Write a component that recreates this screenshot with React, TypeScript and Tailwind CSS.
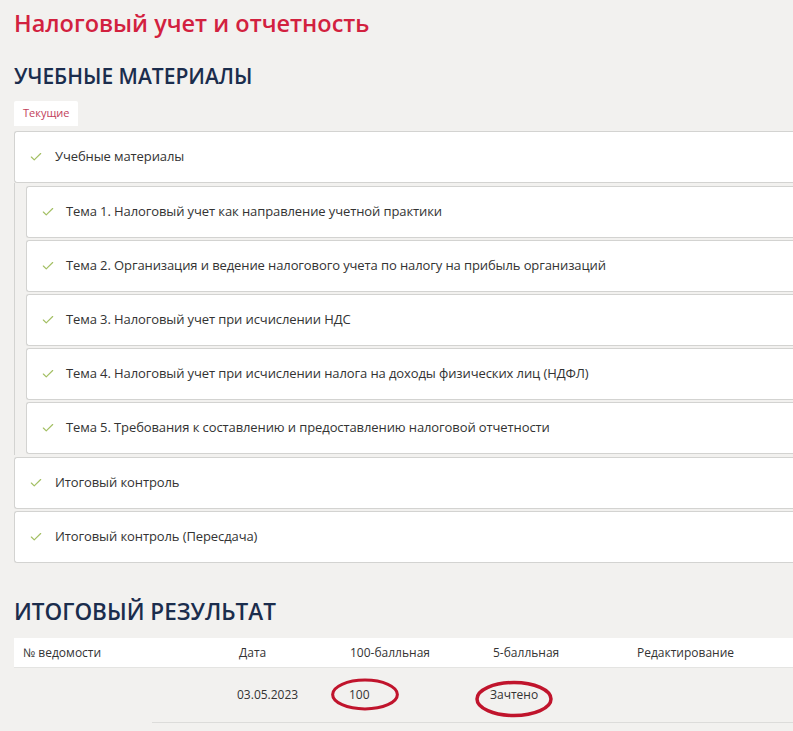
import { Check } from "lucide-react";

const topics = [
  "Тема 1. Налоговый учет как направление учетной практики",
  "Тема 2. Организация и ведение налогового учета по налогу на прибыль организаций",
  "Тема 3. Налоговый учет при исчислении НДС",
  "Тема 4. Налоговый учет при исчислении налога на доходы физических лиц (НДФЛ)",
  "Тема 5. Требования к составлению и предоставлению налоговой отчетности",
];

// marker ring drawn around a cell value
const Ring = ({ className }: { className: string }) => (
  <svg className={className} viewBox="0 0 80 40" preserveAspectRatio="none" fill="none">
    <ellipse cx="40" cy="20" rx="37" ry="16.5" stroke="#c0142c" strokeWidth="3.5" />
  </svg>
);

const Row = ({ title, nested }: { title: string; nested?: boolean }) => (
  <div className="h-[52px] flex items-center bg-white border border-[#d3d3d1] border-r-0 rounded-l-[3px]">
    <Check
      className={nested ? "ml-[14px] mr-[11px] text-[#a3bf63]" : "ml-[14px] mr-[12px] text-[#a3bf63]"}
      size={14}
      strokeWidth={2}
    />
    <span className="text-[13px] tracking-[-0.1px] text-[#333]">{title}</span>
  </div>
);

const App = () => {
  return (
    <div
      className="min-h-[731px] bg-[#f2f1ef] pl-[14px] pt-[6px]"
      style={{ fontFamily: '"Open Sans", "Liberation Sans", sans-serif' }}
    >
      <h1 className="text-[23.5px] font-semibold text-[#d2213f] leading-[34px]">
        Налоговый учет и отчетность
      </h1>

      <h2 className="mt-[22px] text-[21px] font-semibold text-[#1b2d4d] leading-[28px]">
        УЧЕБНЫЕ МАТЕРИАЛЫ
      </h2>

      <div className="mt-[11px] flex">
        <div className="h-[25px] px-[9px] bg-white flex items-center text-[11px] text-[#c2415b] rounded-t-[2px]">
          Текущие
        </div>
      </div>

      <div className="mt-[5px] flex flex-col gap-[2px]">
        <Row title="Учебные материалы" />
        <div className="border-l border-[#d3d3d1] pl-[11px] pb-[1px] -mt-[2px] pt-[3px] flex flex-col gap-[2px]">
          {topics.map((t) => (
            <Row key={t} title={t} nested />
          ))}
        </div>
        <Row title="Итоговый контроль" />
        <Row title="Итоговый контроль (Пересдача)" />
      </div>

      <h2 className="mt-[35px] text-[22.5px] font-semibold text-[#1b2d4d] leading-[28px]">
        ИТОГОВЫЙ РЕЗУЛЬТАТ
      </h2>

      <div className="mt-[12px] text-[12px] text-[#333]">
        <div className="h-[30px] bg-white flex items-center border-b border-[#e4e4e2]">
          <div className="w-[225px] pl-[9px]">№ ведомости</div>
          <div className="w-[111px]">Дата</div>
          <div className="w-[143px]">100-балльная</div>
          <div className="w-[144px]">5-балльная</div>
          <div>Редактирование</div>
        </div>
        <div className="h-[54px] flex items-center">
          <div className="w-[223px]" />
          <div className="w-[112px]">03.05.2023</div>
          <div className="w-[141px] relative">
            <span>100</span>
            <Ring className="absolute left-[-19px] top-[-9px] w-[70px] h-[35px]" />
          </div>
          <div className="relative">
            <span>Зачтено</span>
            <Ring className="absolute left-[-16px] top-[-7px] w-[80px] h-[40px]" />
          </div>
        </div>
        <div className="ml-[138px] border-b border-[#dcdcda]" />
      </div>
    </div>
  );
};

export default App;
